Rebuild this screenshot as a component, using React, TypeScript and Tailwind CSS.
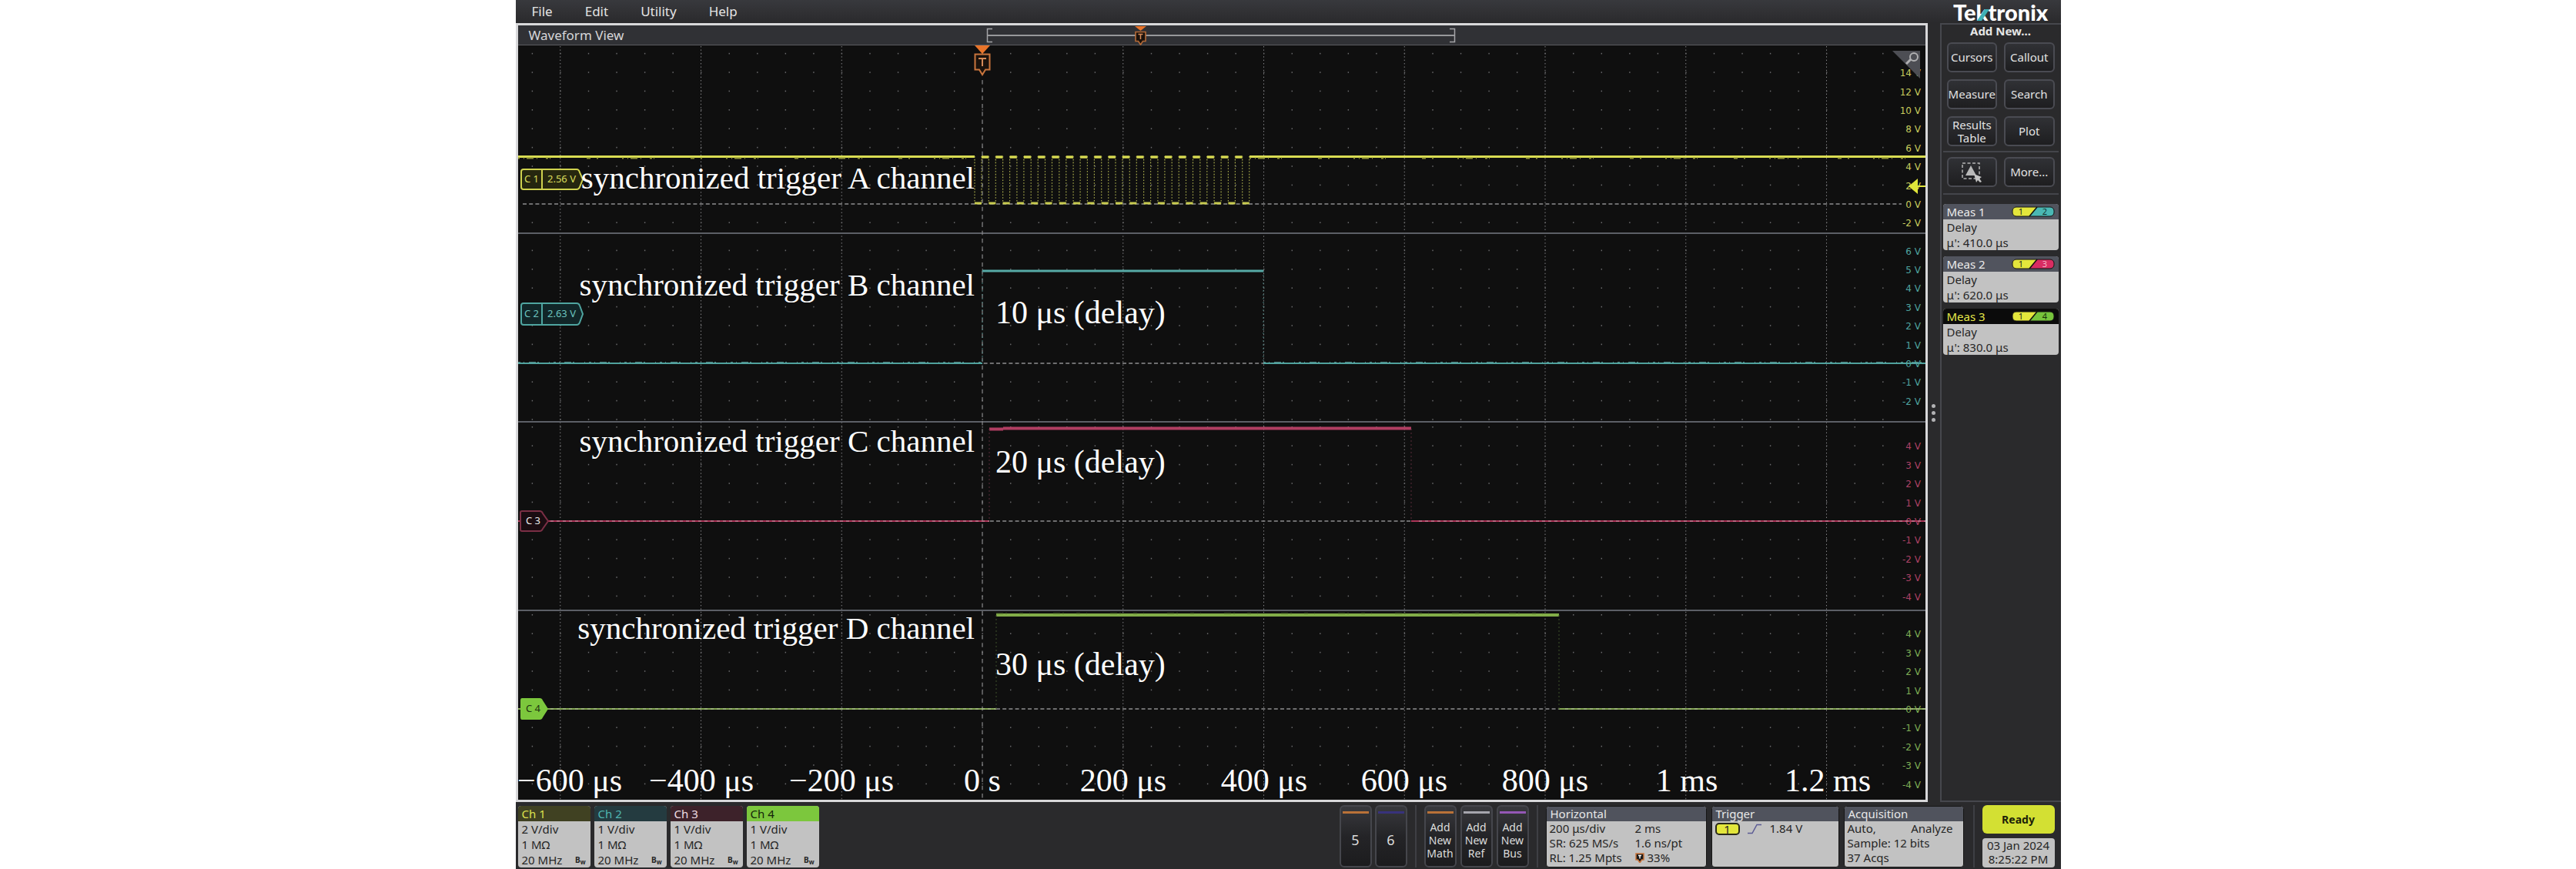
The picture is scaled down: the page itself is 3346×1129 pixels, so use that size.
import React from 'react';

const MENU = ['File', 'Edit', 'Utility', 'Help'];

// Plot geometry, in plot units
const W = 1828;
const H = 980;
const T0 = 603;
const DIV = 182.75;
const STEP = 24.4;

const DIVIDERS = [244, 489, 734];

const TRACKS = [
  { top: 0, bottom: 244, zero: 206, from: -1, to: 7, scale: 2, color: '#c9cd5e' },
  { top: 244, bottom: 489, zero: 413, from: -2, to: 6, scale: 1, color: '#4fa5a0' },
  { top: 489, bottom: 734, zero: 618, from: -4, to: 4, scale: 1, color: '#ad4265' },
  { top: 734, bottom: 980, zero: 862, from: -4, to: 4, scale: 1, color: '#7fae55' },
];

const TIMES = [
  { label: '−600 μs', x: 67 },
  { label: '−400 μs', x: 238 },
  { label: '−200 μs', x: 420 },
  { label: '0 s', x: 603 },
  { label: '200 μs', x: 786 },
  { label: '400 μs', x: 969 },
  { label: '600 μs', x: 1151 },
  { label: '800 μs', x: 1334 },
  { label: '1 ms', x: 1518 },
  { label: '1.2 ms', x: 1701 },
];

const NOTES = [
  { text: 'synchronized trigger A channel', y: 186 },
  { text: 'synchronized trigger B channel', y: 325 },
  { text: 'synchronized trigger C channel', y: 528 },
  { text: 'synchronized trigger D channel', y: 771 },
];

const DELAYS = [
  { text: '10 μs (delay)', y: 361 },
  { text: '20 μs (delay)', y: 555 },
  { text: '30 μs (delay)', y: 818 },
];

const MEASUREMENTS = [
  { name: 'Meas 1', value: "μ': 410.0 μs", channel: '2', color: '#4ab8b4', ink: '#12302f', head: 'bg-[#51545e] text-[#ececec]' },
  { name: 'Meas 2', value: "μ': 620.0 μs", channel: '3', color: '#d92d62', ink: '#f3b4c6', head: 'bg-[#51545e] text-[#ececec]' },
  { name: 'Meas 3', value: "μ': 830.0 μs", channel: '4', color: '#76c43c', ink: '#17300a', head: 'bg-[#0b0b0b] text-[#e4e84a]' },
];

const CHANNELS = [
  { name: 'Ch 1', scale: '2 V/div', head: 'bg-[#404122] text-[#dde04e]' },
  { name: 'Ch 2', scale: '1 V/div', head: 'bg-[#243b40] text-[#4fb5b0]' },
  { name: 'Ch 3', scale: '1 V/div', head: 'bg-[#3d222a] text-[#f0dfe4]' },
  { name: 'Ch 4', scale: '1 V/div', head: 'bg-[#7cc73d] text-[#14240a]' },
];

const ADDERS = [
  { lines: ['Add', 'New', 'Math'], bar: 'bg-[#b97238]' },
  { lines: ['Add', 'New', 'Ref'], bar: 'bg-[#a5a5ad]' },
  { lines: ['Add', 'New', 'Bus'], bar: 'bg-[#9457b5]' },
];

function Graticule() {
  const verticals = Array.from({ length: 10 }, (_, i) => T0 + (i - 3) * DIV);
  const columns = Array.from({ length: 50 }, (_, i) => T0 + (i - 16) * (DIV / 5)).filter((x) => x > 4 && x < 1790);
  return (
    <g>
      {verticals.map((x, i) =>
        i === 3 ? null : (
          <line key={x} x1={x} x2={x} y1="1" y2={H} stroke="#858588" strokeWidth="1" strokeDasharray="1.4 3" />
        ),
      )}
      {TRACKS.map((t) => {
        const rows = Array.from({ length: 24 }, (_, i) => t.zero + (i - 12) * STEP).filter(
          (y) => y > t.top + 5 && y < t.bottom - 1 && y !== t.zero,
        );
        return rows.map((y) =>
          columns.map((x) => <rect key={`${x}-${y}`} x={x - 0.5} y={y - 1} width="1.4" height="1.6" fill="#6c6c6e" />),
        );
      })}
      {DIVIDERS.map((y) => (
        <rect key={y} x="0" y={y - 1} width={W} height="2" fill="#5c5f66" />
      ))}
      {TRACKS.map((t) => (
        <line key={t.zero} x1="6" x2="1797" y1={t.zero} y2={t.zero} stroke="#8e8e90" strokeWidth="1.4" strokeDasharray="5 3.2" />
      ))}
      <line x1={T0} x2={T0} y1="45" y2={H} stroke="#8a8a8c" strokeWidth="1.2" strokeDasharray="5.5 4.8" />
    </g>
  );
}

function AxisLabels() {
  return (
    <g className="font-['DejaVu_Sans',sans-serif] text-[12px]">
      {TRACKS.map((t) =>
        Array.from({ length: t.to - t.from + 1 }, (_, i) => t.from + i).map((n) => (
          <text key={`${t.zero}-${n}`} x="1822" y={t.zero - n * STEP + 5} textAnchor="end" fill={t.color}>
            {n * t.scale} V
          </text>
        )),
      )}
    </g>
  );
}

function Waveforms() {
  const pulses = Array.from({ length: 20 }, (_, i) => 602 + i * 18.3);
  return (
    <g fill="none">
      {/* channel 1: burst of pulses */}
      <path d={`M0 144.500H593M950 144.500H${W}`} stroke="#d9dc52" strokeWidth="3" />
      <path d={`M0 146.500H593M950 146.500H${W}`} stroke="#8f9236" strokeWidth="2" strokeDasharray="2 5 1 3 9 4 1 11 3 2 1 47 5 8 2 31" />
      {pulses.map((x, i) => (
        <g key={x}>
          <path d={`M${x - 9} 144V205M${x} 144V205`} stroke="#a9ac4c" strokeWidth="1.2" strokeDasharray="1.6 2.2" />
          <path d={`M${x - 9} 205H${x}`} stroke="#c9cc50" strokeWidth="3" />
          {i < 19 && <path d={`M${x} 145H${x + 9.3}`} stroke="#d9dc52" strokeWidth="3.4" />}
        </g>
      ))}

      {/* channel 2 */}
      <path d={`M0 413H603M968 413H${W}`} stroke="#4fa19d" strokeWidth="2" />
      <path d={`M0 412H603M968 412H${W}`} stroke="#5fa9a5" strokeWidth="1.5" strokeDasharray="3 4 1 6 9 2 2 13 1 5" />
      <path d="M603 293H968" stroke="#57aaa6" strokeWidth="3" />
      <path d="M603 293V413M968 293V413" stroke="#4b7f7d" strokeWidth="1" strokeDasharray="2 3" />

      {/* channel 3 */}
      <path d={`M0 618H612M1160 618H${W}`} stroke="#ab3558" strokeWidth="2" />
      <path d={`M42 618H612M1170 618H${W}`} stroke="#c99aa8" strokeWidth="1" strokeDasharray="4 4" />
      <path d="M612 498.500H630M630 497.500H1160" stroke="#b03e62" strokeWidth="4" />
      <path d="M612 498V618M1160 498V618" stroke="#5a2d3a" strokeWidth="1" strokeDasharray="2 3" />

      {/* channel 4 */}
      <path d={`M0 862H621M1352 862H${W}`} stroke="#84a653" strokeWidth="2" />
      <path d={`M42 862H621M1360 862H${W}`} stroke="#b4c2a0" strokeWidth="1" strokeDasharray="4 4" />
      <path d="M621 740H1352" stroke="#82ac48" strokeWidth="4" />
      <path d="M621 738H1352" stroke="#4e6a2b" strokeWidth="1" strokeDasharray="9 3 2 16 5 8 1 30" />
      <path d="M621 740V862M1352 740V862" stroke="#41532d" strokeWidth="1" strokeDasharray="2 3" />
    </g>
  );
}

function ChannelTags() {
  return (
    <g className="font-['Noto_Sans',sans-serif] text-[13px]">
      <g fill="#26270f" stroke="#cfd24e" strokeWidth="2">
        <path d="M7 161H76Q79 161 80 165L84 174L80 184Q79 187 76 187H7Q4 187 4 184V164Q4 161 7 161Z" />
        <path d="M31 161V187" />
      </g>
      <text x="8" y="178" fill="#dcdf5c">C 1</text>
      <text x="38" y="178" fill="#dcdf5c">2.56 V</text>

      <g fill="#112628" stroke="#4fa5a0" strokeWidth="2">
        <path d="M7 335H76Q79 335 80 338L84 349L80 360Q79 363 76 363H7Q4 363 4 360V338Q4 335 7 335Z" />
        <path d="M31 335V363" />
      </g>
      <text x="8" y="353" fill="#6cc4bf">C 2</text>
      <text x="38" y="353" fill="#6cc4bf">2.63 V</text>

      <path d="M5 605H28Q31 605 32 608L39 618L32 628Q31 631 28 631H5Q3 631 3 629V607Q3 605 5 605Z" fill="#1a0c11" stroke="#7b2f45" strokeWidth="2" />
      <text x="10" y="622" fill="#ececec">C 3</text>

      <path d="M5 848H28Q31 848 32 851L39 862L32 873Q31 876 28 876H5Q3 876 3 873V851Q3 848 5 848Z" fill="#7cc73d" />
      <text x="10" y="866" fill="#1d3210">C 4</text>
    </g>
  );
}

function Plot() {
  return (
    <svg viewBox={`0 0 ${W} ${H}`} className="block h-auto w-full bg-[#0f0f0f]" role="img" aria-label="Waveforms">
      <Graticule />
      <AxisLabels />
      <Waveforms />
      <ChannelTags />

      {/* trigger position */}
      <path d="M593 0H613L603 11Z" fill="#e8742a" />
      <path d="M593.500 11.500H612.500V31.500H607L603 38L599 31.500H593.500Z" fill="#1b120c" stroke="#c9753d" strokeWidth="2" />
      <path d="M598 17H608M603 17V27" stroke="#d58a58" strokeWidth="2" />

      {/* trigger level */}
      <path d="M1806 183L1818 173V182H1828V184H1818V193Z" fill="#e0e53a" />

      <g className="font-['Liberation_Serif',serif] text-[42px]" fill="#ffffff">
        {NOTES.map((n) => (
          <text key={n.text} x="593" y={n.y} textAnchor="end" className="text-[41px]">{n.text}</text>
        ))}
        {DELAYS.map((n) => (
          <text key={n.text} x="620" y={n.y}>{n.text}</text>
        ))}
        {TIMES.map((t) => (
          <text key={t.label} x={t.x} y="969" textAnchor="middle">{t.label}</text>
        ))}
      </g>
    </svg>
  );
}

function Overview() {
  return (
    <svg viewBox="0 0 610 26" className="h-[26px] w-[610px]" aria-hidden="true">
      <path d="M8 4.500H1.500V21.500H8M602 4.500H608.500V21.500H602" fill="none" stroke="#a4a5a8" strokeWidth="1.500" />
      <path d="M2 13H608" stroke="#97989b" strokeWidth="2" />
      <path d="M193 1H208L200.500 7Z" fill="#e8742a" />
      <path d="M194 8.500H207V20.500H203.500L200.500 25L197.500 20.500H194Z" fill="#1b120c" stroke="#b46a37" strokeWidth="1.600" />
      <path d="M197.500 11.500H203.500M200.500 11.500V18" stroke="#d58a58" strokeWidth="1.500" />
    </svg>
  );
}

function Logo() {
  return (
    <svg viewBox="0 0 130 30" className="h-[30px] w-[130px] overflow-visible" role="img" aria-label="Tektronix">
      <text x="0" y="27" fill="#ffffff" className="font-['Lato',sans-serif] text-[29px] font-black">Tektronix</text>
      <path d="M31 27L41 12H47L37 27Z" fill="#3fb0b5" />
    </svg>
  );
}

function PanelButton({ children, label }: { children: React.ReactNode; label?: string }) {
  return (
    <button
      type="button"
      aria-label={label}
      className="flex h-[39px] items-center justify-center rounded-md border-2 border-[#4a4b52] bg-linear-to-b from-[#303135] to-[#1e1e20] text-[15px] leading-[17px] text-[#e2e2e2]"
    >
      {children}
    </button>
  );
}

function Badge({ channel, color, ink }: { channel: string; color: string; ink: string }) {
  return (
    <svg viewBox="0 0 56 14" className="h-[14px] w-[56px]" aria-hidden="true">
      <rect x="1" y="1" width="54" height="12" rx="5" fill={color} />
      <path d="M6 1H33L23 13H6Q1 13 1 8V6Q1 1 6 1Z" fill="#e3e63c" />
      <path d="M33 1L23 13" stroke="#101010" strokeWidth="1.500" />
      <rect x="1" y="1" width="54" height="12" rx="5" fill="none" stroke="#141414" strokeWidth="1" />
      <text x="12" y="11" textAnchor="middle" fill="#222222" className="text-[11px]">1</text>
      <text x="43" y="11" textAnchor="middle" fill={ink} className="text-[11px]">{channel}</text>
    </svg>
  );
}

function Sidebar() {
  return (
    <aside className="w-[157px] shrink-0 border-y-2 border-l-2 border-[#46474d] pr-[3px] pl-[2px]">
      <h2 className="text-center text-[15px] leading-[17px] font-bold text-[#e6e6e6]">Add New...</h2>
      <div className="mt-[6px] grid grid-cols-2 gap-[9px] px-[5px]">
        <PanelButton>Cursors</PanelButton>
        <PanelButton>Callout</PanelButton>
        <PanelButton>Measure</PanelButton>
        <PanelButton>Search</PanelButton>
        <PanelButton>Results<br />Table</PanelButton>
        <PanelButton>Plot</PanelButton>
      </div>
      <div className="mt-[6px] grid grid-cols-2 gap-[9px] border-y-2 border-[#44454b] px-[5px] pt-[6px] pb-2">
        <PanelButton label="Draw a box">
          <svg viewBox="0 0 28 26" className="h-[26px] w-7" aria-hidden="true">
            <rect x="2" y="1" width="22" height="20" fill="none" stroke="#b4b4b4" strokeWidth="1.500" strokeDasharray="4 2.500" />
            <path d="M13 4L20 17H6Z" fill="#b9b9b9" />
            <path d="M17 15L27 19L24 21L27 25L25 26L22 23L20 26Z" fill="#c4c4c4" />
          </svg>
        </PanelButton>
        <PanelButton>More...</PanelButton>
      </div>
      <ul className="mt-3 flex flex-col gap-2">
        {MEASUREMENTS.map((m) => (
          <li key={m.name} className="overflow-hidden rounded bg-[#c2c2c2] text-[15px] leading-5 text-[#262626]">
            <div className={`flex items-center justify-between px-[5px] ${m.head}`}>
              {m.name}
              <Badge channel={m.channel} color={m.color} ink={m.ink} />
            </div>
            <div className="px-[5px]">
              <p>Delay</p>
              <p>{m.value}</p>
            </div>
          </li>
        ))}
      </ul>
    </aside>
  );
}

function SlotButton({ lines, bar }: { lines: string[]; bar: string }) {
  return (
    <button
      type="button"
      className="flex h-[81px] w-[42px] flex-col items-center rounded-md border-2 border-[#45464c] bg-linear-to-b from-[#38393d] via-[#242427] to-[#1c1c1e] pt-[6px] text-[14px] leading-[17px] text-[#dcdcdc]"
    >
      <span className={`h-[3px] w-[34px] ${bar}`} />
      <span className="flex flex-1 flex-col justify-center">
        {lines.map((l) => (
          <span key={l} className={lines.length === 1 ? 'text-[18px]' : ''}>{l}</span>
        ))}
      </span>
    </button>
  );
}

function InfoCard({ title, className, children }: { title: string; className: string; children?: React.ReactNode }) {
  return (
    <section className={`h-[80px] overflow-hidden rounded border border-[#161616] bg-[#c2c2c2] text-[15px] leading-[19px] text-[#262626] ${className}`}>
      <h3 className="bg-[#50535d] px-[5px] leading-[19px] text-[#e8e8e8]">{title}</h3>
      {children}
    </section>
  );
}

function BottomBar() {
  return (
    <footer className="flex h-[87px] items-start pt-1 pl-[3px]">
      <div className="flex gap-[5px] pt-px">
        {CHANNELS.map((c) => (
          <section key={c.name} className="h-[80px] w-[94px] overflow-hidden rounded bg-[#c2c2c2] text-[15px] leading-5 text-[#262626]">
            <h3 className={`px-[5px] leading-5 ${c.head}`}>{c.name}</h3>
            <p className="px-[5px]">{c.scale}</p>
            <p className="px-[5px]">1 MΩ</p>
            <p className="flex items-center justify-between pr-[6px] pl-[5px]">
              20 MHz
              <span className="text-[10px] leading-3 font-bold">B<sub className="text-[8px]">w</sub></span>
            </p>
          </section>
        ))}
      </div>

      <div className="ml-auto flex pr-2">
        <div className="flex gap-1 pr-[10px]">
          <SlotButton lines={['5']} bar="bg-[#b97238]" />
          <SlotButton lines={['6']} bar="bg-[#38327c]" />
        </div>
        <div className="flex gap-[5px] border-x-2 border-[#3e3f44] px-[10px]">
          {ADDERS.map((a) => (
            <SlotButton key={a.lines[2]} lines={a.lines} bar={a.bar} />
          ))}
        </div>
        <div className="flex gap-[6px] border-r-2 border-[#3e3f44] pt-px pr-3 pl-[10px]">
          <InfoCard title="Horizontal" className="w-[209px]">
            <div className="grid grid-cols-[111px_1fr] pl-1 whitespace-nowrap">
              <span>200 μs/div</span>
              <span>2 ms</span>
              <span>SR: 625 MS/s</span>
              <span>1.6 ns/pt</span>
              <span>RL: 1.25 Mpts</span>
              <span className="flex items-center gap-1">
                <svg viewBox="0 0 12 13" className="h-[13px] w-3" aria-hidden="true">
                  <path d="M1 1H11V9H8.500L6 13L3.500 9H1Z" fill="#1a1a1a" stroke="#c9753d" strokeWidth="1.500" />
                  <path d="M4 3.500H8M6 3.500V7.500" stroke="#ffffff" strokeWidth="1.400" />
                </svg>
                33%
              </span>
            </div>
          </InfoCard>
          <InfoCard title="Trigger" className="w-[166px]">
            <div className="flex items-center pl-1">
              <span className="h-4 w-8 rounded-[5px] border-2 border-[#2a2a1a] bg-[#e3e63c] text-center leading-3">1</span>
              <svg viewBox="0 0 18 14" className="ml-[10px] h-[14px] w-[18px]" aria-hidden="true">
                <path d="M0 12.500H6L12 1.500H18" fill="none" stroke="#5b5b95" strokeWidth="1.500" />
              </svg>
              <span className="ml-[11px]">1.84 V</span>
            </div>
          </InfoCard>
          <InfoCard title="Acquisition" className="w-[156px]">
            <div className="pr-[13px] pl-1">
              <p className="flex justify-between"><span>Auto,</span><span>Analyze</span></p>
              <p>Sample: 12 bits</p>
              <p>37 Acqs</p>
            </div>
          </InfoCard>
        </div>
        <div className="flex w-[104px] flex-col gap-[6px] pl-[10px]">
          <button type="button" className="h-[37px] rounded-md bg-[#d3e033] text-[14px] leading-5 font-bold text-[#1c1f08]">Ready</button>
          <p className="h-[38px] rounded bg-[#c2c2c2] text-center text-[15px] leading-[18px] text-[#262626]">
            03 Jan 2024<br />8:25:22 PM
          </p>
        </div>
      </div>
    </footer>
  );
}

export default function App() {
  return (
    <div className="flex w-full justify-center bg-white">
      <div className="w-full max-w-[2007px] bg-[#2a2a2c] font-['Noto_Sans','Open_Sans',sans-serif]">
        <header className="flex h-[30px] items-center justify-between bg-linear-to-b from-[#38393d] to-[#2a2a2c] pr-[10px] pl-[21px]">
          <nav className="flex gap-[42px] text-[17px] leading-6 text-[#e4e4e4]">
            {MENU.map((m) => (
              <button key={m} type="button">{m}</button>
            ))}
          </nav>
          <Logo />
        </header>

        <main className="flex">
          <section className="min-w-0 flex-1 border-3 border-[#d8d8da]">
            <div className="relative flex h-[26px] items-center border-b border-[#5a5b60] bg-[#303135] pl-[14px]">
              <h1 className="w-[594px] text-[17px] leading-6 text-[#d6d6d8]">Waveform View</h1>
              <Overview />
            </div>
            <div className="relative">
              <Plot />
              <button type="button" aria-label="Zoom" className="absolute top-[7px] right-[7px]">
                <svg viewBox="0 0 36 36" className="block size-9" aria-hidden="true">
                  <path d="M0 0H36V36Z" fill="#4d4e54" />
                  <circle cx="28" cy="8" r="5" fill="none" stroke="#b0b0b2" strokeWidth="2" />
                  <path d="M24 11L18 17" stroke="#b0b0b2" strokeWidth="3" />
                </svg>
              </button>
            </div>
          </section>
          <div className="flex w-4 shrink-0 flex-col items-center justify-center gap-1">
            <span className="size-[5px] rounded-full bg-[#b2b2b4]" />
            <span className="size-[5px] rounded-full bg-[#b2b2b4]" />
            <span className="size-[5px] rounded-full bg-[#b2b2b4]" />
          </div>
          <Sidebar />
        </main>

        <BottomBar />
      </div>
    </div>
  );
}
